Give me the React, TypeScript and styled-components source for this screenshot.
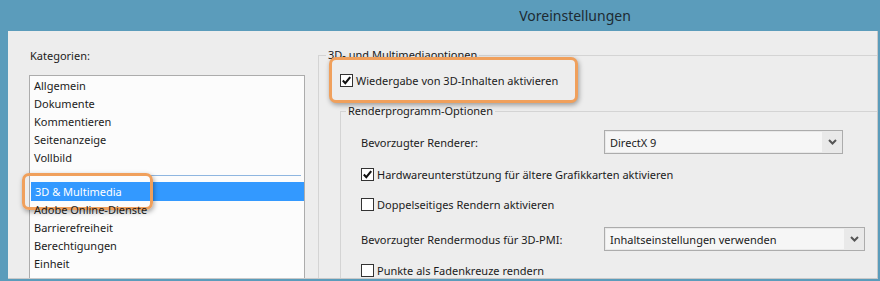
import React from "react";
import styled, { createGlobalStyle } from "styled-components";

const GlobalStyle = createGlobalStyle`
  html, body { margin: 0; padding: 0; }
  body {
    background: #ececec;
    font-family: "Noto Sans", "DejaVu Sans", sans-serif;
    font-size: 11px;
    color: #1b1b1b;
  }
`;

const Frame = styled.div`
  width: 880px;
  height: 281px;
  background: #5b9cbb;
  display: flex;
  flex-direction: column;
  overflow: hidden;
`;

const TitleBar = styled.div`
  height: 31px;
  flex: none;
  display: flex;
  align-items: center;
  justify-content: center;
  padding-left: 270px;
  font-size: 14px;
  color: #1d2a32;
`;

const Body = styled.div`
  flex: 1;
  min-height: 0;
  display: flex;
  margin-left: 8px;
  margin-right: 2px;
  margin-bottom: 2px;
  background: #ededed;
  border-right: 1px solid #c9c9c9;
  border-bottom: 1px solid #c9c9c9;
  overflow: hidden;
`;

const LeftPanel = styled.div`
  width: 276px;
  flex: none;
  margin-left: 21px;
  padding-top: 17px;
  display: flex;
  flex-direction: column;
`;

const Caption = styled.div`
  height: 16px;
  line-height: 16px;
  margin-left: 1px;
  margin-bottom: 11px;
`;

const List = styled.div`
  flex: 1;
  border: 1px solid #acacac;
  border-bottom: none;
  background: #fcfcfc;
  padding-top: 1px;
  display: flex;
  flex-direction: column;
`;

const Item = styled.div<{ $selected?: boolean }>`
  position: relative;
  flex: none;
  height: ${(p) => (p.$selected ? 19 : 18)}px;
  line-height: ${(p) => (p.$selected ? 19 : 18)}px;
  padding-left: 4px;
  margin-left: ${(p) => (p.$selected ? 1 : 0)}px;
  background: ${(p) => (p.$selected ? "#3399ff" : "transparent")};
  color: ${(p) => (p.$selected ? "#ffffff" : "#1b1b1b")};
  white-space: nowrap;
`;

const Divider = styled.div`
  flex: none;
  height: 8px;
  margin: 0 3px 6px 3px;
  border-bottom: 1px solid #8fb6e0;
`;

const Callout = styled.div`
  box-sizing: border-box;
  border: 3px solid #f0a05c;
  border-radius: 7px;
  box-shadow: 1px 2px 5px rgba(0, 0, 0, 0.35);
`;

const ItemCallout = styled(Callout)`
  position: absolute;
  left: -9px;
  top: -9px;
  width: 131px;
  height: 37px;
  pointer-events: none;
`;

const RightPanel = styled.div`
  flex: 1;
  min-width: 0;
  margin-left: 13px;
  padding-top: 16px;
  display: flex;
`;

const Group = styled.fieldset<{ $indent?: number }>`
  flex: 1;
  min-width: 0;
  margin: 0 -40px 0 ${(p) => p.$indent ?? 0}px;
  padding: 0;
  border: 1px solid #d4d4d4;
  border-bottom: none;
`;

const Legend = styled.legend<{ $offset: number }>`
  margin-left: ${(p) => p.$offset}px;
  padding: 0 2px;
  height: 16px;
  line-height: 16px;
  white-space: nowrap;
`;

const MainOption = styled(Callout)`
  position: relative;
  width: 249px;
  height: 46px;
  margin: -6px 0 0 10px;
  padding-left: 8px;
  display: flex;
  align-items: center;
  gap: 3px;
  background: #ededed;
`;

const Rows = styled.div`
  padding: 11px 0 0 20px;
  display: flex;
  flex-direction: column;
`;

const Row = styled.div<{ $mt?: number; $h: number }>`
  height: ${(p) => p.$h}px;
  margin-top: ${(p) => p.$mt ?? 0}px;
  display: flex;
  align-items: center;
  gap: 3px;
  white-space: nowrap;
`;

const FieldLabel = styled.div`
  width: 240px;
  flex: none;
`;

const Box = styled.div`
  width: 13px;
  height: 13px;
  box-sizing: border-box;
  border: 1px solid #333333;
  background: #ffffff;
  flex: none;
  display: flex;
  align-items: center;
  justify-content: center;
`;

const SelectBox = styled.div<{ $w: number }>`
  width: ${(p) => p.$w}px;
  height: 24px;
  box-sizing: border-box;
  border: 1px solid #acacac;
  background: #e9e9e9;
  display: flex;
  flex: none;
`;

const SelectValue = styled.div`
  flex: 1;
  margin: 1px 0 1px 1px;
  padding-left: 4px;
  background: #f6f6f6;
  display: flex;
  align-items: center;
`;

const Arrow = styled.div`
  width: 20px;
  flex: none;
  display: flex;
  align-items: center;
  justify-content: center;
`;

const Check = ({ checked }: { checked?: boolean }) => (
  <Box>
    {checked && (
      <svg width="11" height="11" viewBox="0 0 11 11">
        <path d="M1.8 5.6 L4.3 8.2 L9.2 2.2" fill="none" stroke="#111" strokeWidth="2.1" />
      </svg>
    )}
  </Box>
);

const Select = ({ value, width }: { value: string; width: number }) => (
  <SelectBox $w={width}>
    <SelectValue>{value}</SelectValue>
    <Arrow>
      <svg width="9" height="6" viewBox="0 0 9 6">
        <path d="M1 1 L4.5 4.5 L8 1" fill="none" stroke="#555" strokeWidth="2" />
      </svg>
    </Arrow>
  </SelectBox>
);

const beforeItems = ["Allgemein", "Dokumente", "Kommentieren", "Seitenanzeige", "Vollbild"];
const afterItems = ["Adobe Online-Dienste", "Barrierefreiheit", "Berechtigungen", "Einheit", "E-Mail-Konten"];

export default function App() {
  return (
    <>
      <GlobalStyle />
      <Frame>
        <TitleBar>Voreinstellungen</TitleBar>
        <Body>
          <LeftPanel>
            <Caption>Kategorien:</Caption>
            <List>
              {beforeItems.map((t) => (
                <Item key={t}>{t}</Item>
              ))}
              <Divider />
              <Item $selected>
                3D &amp; Multimedia
                <ItemCallout />
              </Item>
              {afterItems.map((t) => (
                <Item key={t}>{t}</Item>
              ))}
            </List>
          </LeftPanel>
          <RightPanel>
            <Group>
              <Legend $offset={7}>3D- und Multimediaoptionen</Legend>
              <MainOption>
                <Check checked />
                <span>Wiedergabe von 3D-Inhalten aktivieren</span>
              </MainOption>
              <Group $indent={21}>
                <Legend $offset={5}>Renderprogramm-Optionen</Legend>
                <Rows>
                  <Row $h={24}>
                    <FieldLabel>Bevorzugter Renderer:</FieldLabel>
                    <Select value="DirectX 9" width={239} />
                  </Row>
                  <Row $h={16} $mt={12}>
                    <Check checked />
                    <span>Hardwareunterstützung für ältere Grafikkarten aktivieren</span>
                  </Row>
                  <Row $h={16} $mt={14}>
                    <Check />
                    <span>Doppelseitiges Rendern aktivieren</span>
                  </Row>
                  <Row $h={24} $mt={15}>
                    <FieldLabel>Bevorzugter Rendermodus für 3D-PMI:</FieldLabel>
                    <Select value="Inhaltseinstellungen verwenden" width={261} />
                  </Row>
                  <Row $h={16} $mt={11}>
                    <Check />
                    <span>Punkte als Fadenkreuze rendern</span>
                  </Row>
                </Rows>
              </Group>
            </Group>
          </RightPanel>
        </Body>
      </Frame>
    </>
  );
}
